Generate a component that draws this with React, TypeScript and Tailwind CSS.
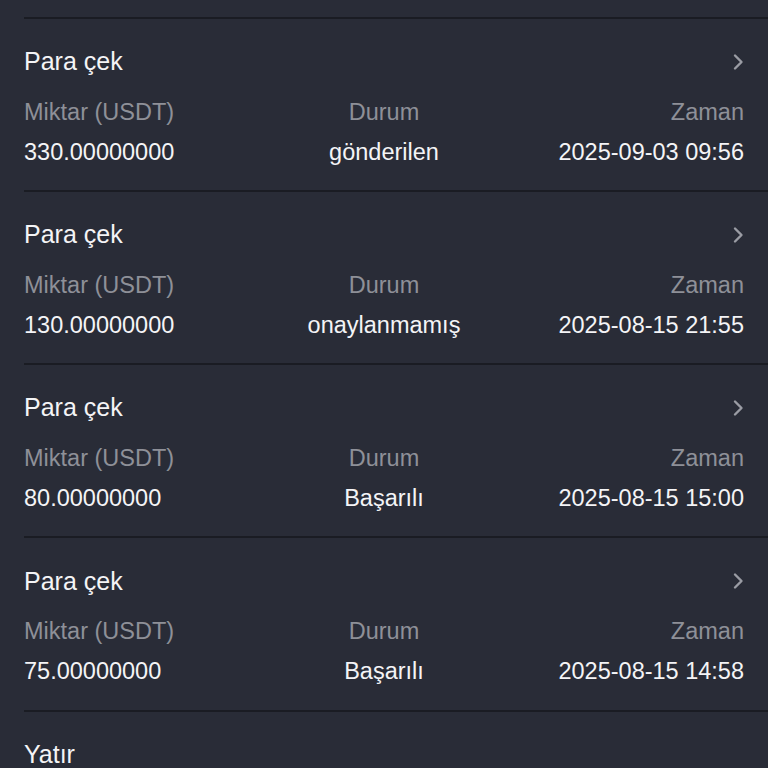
const records = [
  { title: "Para çek", amount: "330.00000000", status: "gönderilen", time: "2025-09-03 09:56" },
  { title: "Para çek", amount: "130.00000000", status: "onaylanmamış", time: "2025-08-15 21:55" },
  { title: "Para çek", amount: "80.00000000", status: "Başarılı", time: "2025-08-15 15:00" },
  { title: "Para çek", amount: "75.00000000", status: "Başarılı", time: "2025-08-15 14:58" },
];

function Chevron() {
  return (
    <svg width="12" height="18" viewBox="0 0 12 18" fill="none" className="shrink-0">
      <path d="M3 2.5 L9.5 9 L3 15.5" stroke="#9a9ca4" strokeWidth="2.4" strokeLinecap="round" strokeLinejoin="round" />
    </svg>
  );
}

function RecordRow({ title, amount, status, time }: (typeof records)[number]) {
  return (
    <div className="ml-6 border-t-2 border-[#1a1c23] pr-6 pt-[23px] pb-[18.3px]">
      <div className="flex h-10 items-center justify-between">
        <span className="text-[25px] text-[#f4f4f6]">{title}</span>
        <Chevron />
      </div>
      <div className="mt-[10px] grid grid-cols-3 text-[23.5px] leading-10 text-[#8e9098]">
        <span>Miktar (USDT)</span>
        <span className="text-center">Durum</span>
        <span className="text-right">Zaman</span>
      </div>
      <div className="grid grid-cols-3 text-[23.5px] leading-10 text-[#f4f4f6]">
        <span>{amount}</span>
        <span className="text-center">{status}</span>
        <span className="text-right">{time}</span>
      </div>
    </div>
  );
}

export default function App() {
  return (
    <div
      className="h-screen overflow-hidden bg-[#292c37]"
      style={{ fontFamily: '"Liberation Sans", Arial, sans-serif' }}
    >
      <div className="h-[16.5px]" />
      {records.map((r, i) => (
        <RecordRow key={i} {...r} />
      ))}
      <div className="ml-6 border-t-2 border-[#1a1c23] pr-6 pt-[23px]">
        <div className="flex h-10 items-center">
          <span className="text-[25px] text-[#f4f4f6]">Yatır</span>
        </div>
      </div>
    </div>
  );
}
